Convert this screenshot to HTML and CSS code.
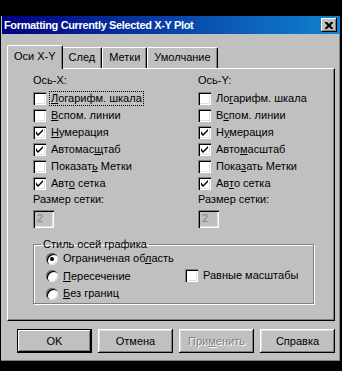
FILE: index.html
```html
<!DOCTYPE html>
<html lang="ru">
<head>
    <meta charset="UTF-8">
    <title>Formatting Currently Selected X-Y Plot</title>
    <link rel="stylesheet" href="styles.css">
</head>
<body>
    <div class="dialog">
        <div class="titlebar">
            <span class="title">Formatting Currently Selected X-Y Plot</span>
            <span class="close">
                <svg width="8" height="7" viewBox="0 0 8 7"><path d="M0 0h2l2 2 2-2h2v1l-2.5 2.5 2.5 2.5v1h-2l-2-2-2 2h-2v-1l2.5-2.5-2.5-2.5z" fill="#000"/></svg>
            </span>
        </div>

        <div class="tabs">
            <div class="tab active">Оси X-Y</div>
            <div class="tab">След</div>
            <div class="tab">Метки</div>
            <div class="tab">Умолчание</div>
        </div>

        <div class="panel">
            <div class="columns">
                <div class="column">
                    <div class="caption">Ось-X:</div>
                    <div class="row"><span class="box"></span><span class="focus"><u>Л</u>огарифм. шкала</span></div>
                    <div class="row"><span class="box"></span><span><u>В</u>спом. линии</span></div>
                    <div class="row"><span class="box checked"></span><span><u>Н</u>умерация</span></div>
                    <div class="row"><span class="box checked"></span><span>Автомас<u>щ</u>таб</span></div>
                    <div class="row"><span class="box"></span><span>Показат<u>ь</u> Метки</span></div>
                    <div class="row"><span class="box checked"></span><span>Авт<u>о</u> сетка</span></div>
                    <div class="caption grid-label">Размер сетки:</div>
                    <div class="field">2</div>
                </div>
                <div class="column">
                    <div class="caption">Ось-Y:</div>
                    <div class="row"><span class="box"></span><span>Ло<u>г</u>арифм. шкала</span></div>
                    <div class="row"><span class="box"></span><span>В<u>с</u>пом. линии</span></div>
                    <div class="row"><span class="box checked"></span><span>Н<u>у</u>мерация</span></div>
                    <div class="row"><span class="box checked"></span><span>Авто<u>м</u>асштаб</span></div>
                    <div class="row"><span class="box"></span><span>Пока<u>з</u>ать Метки</span></div>
                    <div class="row"><span class="box checked"></span><span>Ав<u>т</u>о сетка</span></div>
                    <div class="caption grid-label">Размер сетки:</div>
                    <div class="field">2</div>
                </div>
            </div>

            <fieldset class="group">
                <legend>Стиль осей графика</legend>
                <div class="group-body">
                    <div class="radios">
                        <div class="row"><span class="radio selected"></span><span>Ограниченая об<u>л</u>асть</span></div>
                        <div class="row"><span class="radio"></span><span><u>П</u>ересечение</span></div>
                        <div class="row"><span class="radio"></span><span><u>Б</u>ез границ</span></div>
                    </div>
                    <div class="row equal"><span class="box"></span><span>Равные масштабы</span></div>
                </div>
            </fieldset>
        </div>

        <div class="buttons">
            <div class="btn default">OK</div>
            <div class="btn">Отмена</div>
            <div class="btn disabled">При<u>м</u>енить</div>
            <div class="btn">Справка</div>
        </div>
    </div>
</body>
</html>
```

FILE: styles.css
```css
* {
    margin: 0;
    padding: 0;
    box-sizing: border-box;
}
body {
    background: #000;
    font-family: 'Liberation Sans', Arial, sans-serif;
    font-size: 11px;
    color: #000;
    padding: 16px 0 0 1px;
}
u {
    text-decoration: underline;
    text-underline-offset: 1px;
}
.dialog {
    width: 340px;
    height: 346px;
    background: #c0c0c0;
    box-shadow: inset -1px -1px #000, inset -2px -2px #808080;
    display: flex;
    flex-direction: column;
}
.titlebar {
    height: 18px;
    margin: 0 1px 0 1px;
    background: linear-gradient(90deg, #000080, #1084d0);
    display: flex;
    align-items: center;
    justify-content: space-between;
    padding: 0 3px 0 2px;
}
.title {
    color: #fff;
    font-weight: bold;
    font-size: 11px;
    letter-spacing: -0.35px;
}
.close {
    width: 16px;
    height: 14px;
    background: #c0c0c0;
    box-shadow: inset -1px -1px #000, inset 1px 1px #fff, inset -2px -2px #808080;
    display: flex;
    align-items: center;
    justify-content: center;
}
.tabs {
    display: flex;
    align-items: flex-end;
    margin: 11px 0 0 8px;
    height: 23px;
}
.tab {
    height: 21px;
    padding: 3px 6px 0 6px;
    border-top: 1px solid #fff;
    border-left: 1px solid #fff;
    border-right: 1px solid #000;
    box-shadow: inset -1px 0 #808080;
    border-radius: 2px 2px 0 0;
    position: relative;
}
.tab.active {
    height: 24px;
    margin: 0 -1px -1px -2px;
    padding: 4px 6px 0 6px;
    background: #c0c0c0;
    z-index: 1;
}
.panel {
    margin: 0 6px 0 6px;
    height: 253px;
    border-top: 1px solid #fff;
    border-left: 1px solid #fff;
    border-right: 1px solid #000;
    border-bottom: 1px solid #000;
    box-shadow: inset -1px -1px #808080;
    padding: 5px 0 0 25px;
}
.columns {
    display: flex;
}
.column {
    width: 165px;
    flex: none;
    display: flex;
    flex-direction: column;
}
.column + .column {
    width: 130px;
}
.caption {
    height: 13px;
    line-height: 13px;
    margin-bottom: 3px;
}
.row {
    height: 17px;
    display: flex;
    align-items: center;
    gap: 4px;
}
.row span:last-child {
    line-height: 13px;
    padding: 0 1px;
}
.focus {
    outline: 1px dotted #000;
}
.box {
    width: 13px;
    height: 13px;
    flex: none;
    background: #fff;
    box-shadow: inset 1px 1px #808080, inset 2px 2px #000, inset -1px -1px #fff, inset -2px -2px #dfdfdf;
    display: flex;
    align-items: center;
    justify-content: center;
}
.box.checked::after {
    content: "";
    width: 7px;
    height: 7px;
    background: no-repeat center/7px 7px url("data:image/svg+xml;utf8,<svg xmlns='http://www.w3.org/2000/svg' width='7' height='7' viewBox='0 0 7 7'><path d='M0 2v3l2 2 5-5v-2l-5 5z' fill='black'/></svg>");
}
.grid-label {
    margin-top: 1px;
}
.field {
    width: 21px;
    height: 18px;
    margin-top: 1px;
    background: #c0c0c0;
    color: #808080;
    box-shadow: inset 1px 1px #808080, inset 2px 2px #000, inset -1px -1px #fff, inset -2px -2px #dfdfdf;
    padding: 2px 0 0 4px;
    line-height: 13px;
}
.group {
    width: 281px;
    height: 66px;
    margin-top: 10px;
    border: 1px solid #808080;
    box-shadow: 1px 1px #fff, inset 1px 1px #fff;
    padding: 0 0 0 12px;
}
.group legend {
    padding: 0 2px;
    margin-left: -5px;
    line-height: 13px;
}
.group-body {
    display: flex;
    align-items: flex-start;
    margin-top: -1px;
}
.radios {
    width: 139px;
}
.radios .row {
    height: 17.5px;
}
.radio {
    width: 12px;
    height: 12px;
    flex: none;
    border-radius: 50%;
    background: #fff;
    box-shadow: inset 1px 1px #808080, inset 2px 2px #000, inset -1px -1px #dfdfdf;
    display: flex;
    align-items: center;
    justify-content: center;
}
.radio.selected::after {
    content: "";
    width: 4px;
    height: 4px;
    border-radius: 50%;
    background: #000;
}
.equal {
    margin-top: 17px;
}
.buttons {
    display: flex;
    gap: 6px;
    margin: 8px 0 0 16px;
}
.btn {
    width: 75px;
    height: 24px;
    display: flex;
    align-items: center;
    justify-content: center;
    background: #c0c0c0;
    box-shadow: inset -1px -1px #000, inset 1px 1px #fff, inset -2px -2px #808080, inset 2px 2px #dfdfdf;
}
.btn.default {
    box-shadow: inset 0 0 0 1px #000, inset -2px -2px #000, inset 2px 2px #fff, inset -3px -3px #808080;
}
.btn.disabled {
    color: #808080;
    text-shadow: 1px 1px #fff;
}
```
